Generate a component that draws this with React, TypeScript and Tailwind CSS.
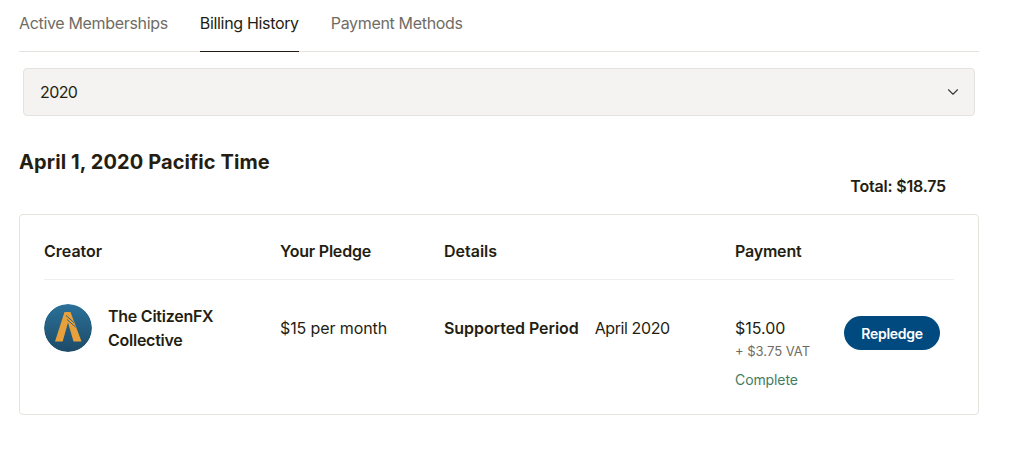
import React from 'react';
import { ChevronDown } from 'lucide-react';

const font = { fontFamily: 'Inter, "Liberation Sans", sans-serif' };

const CitizenLogo = () => (
  <svg viewBox="0 0 48 48" className="w-12 h-12 rounded-full shrink-0">
    <defs>
      <linearGradient id="cfx" x1="0" y1="0" x2="0" y2="1">
        <stop offset="0" stopColor="#2b7199" />
        <stop offset="1" stopColor="#1d4a68" />
      </linearGradient>
    </defs>
    <circle cx="24" cy="24" r="24" fill="url(#cfx)" />
    <path d="M20.5 8H26.5L37.5 37.5H29.5L24 18.5L18.7 37.5H11Z" fill="#e8a03a" />
    <path d="M22 11.5L30 18.5M23 15.5L31.5 23" stroke="#27658b" strokeWidth="1" fill="none" />
  </svg>
);

export default function App() {
  return (
    <div className="w-[1016px] h-[457px] bg-white overflow-hidden pl-[19px] text-[#241e12]" style={font}>
      <div className="w-[960px]">
        <div className="flex gap-8 h-[52px] border-b border-[#e5e3dd] text-[16px] tracking-[-0.33px] text-[#706c64]">
          <div className="pt-[11px]">Active Memberships</div>
          <div className="pt-[11px] h-[52px] border-b border-[#241e12] text-[#241e12]">Billing History</div>
          <div className="pt-[11px]">Payment Methods</div>
        </div>

        <div className="mx-1 mt-4 h-12 flex items-center justify-between bg-[#f4f3f1] border border-[#e5e3dd] rounded pl-4 pr-3 text-[16px]">
          <span className="tracking-[-0.6px]">2020</span>
          <ChevronDown className="w-[18px] h-[18px] text-[#3d3a34]" strokeWidth={1.5} />
        </div>

        <h2 className="mt-[33px] text-[20px] leading-[26px] font-bold tracking-[0.1px]">April 1, 2020 Pacific Time</h2>

        <div className="mt-[1px] pr-[33px] text-right text-[16px] leading-5 font-semibold tracking-[-0.2px]">Total: $18.75</div>

        <div className="mt-[18px] h-[201px] border border-[#e5e3dd] rounded px-6">
          <div className="flex h-[65px] pt-[8px] items-center border-b border-[#f0efeb] text-[16px] font-semibold">
            <div className="w-[236px]">Creator</div>
            <div className="w-[164px] tracking-[-0.2px]">Your Pledge</div>
            <div className="w-[291px]">Details</div>
            <div className="tracking-[-0.2px]">Payment</div>
          </div>

          <div className="flex pt-6">
            <div className="w-[236px] flex items-start gap-4">
              <CitizenLogo />
              <div className="text-[16px] leading-6 font-semibold w-[120px] tracking-[-0.25px]">The CitizenFX Collective</div>
            </div>
            <div className="w-[164px] pt-[12px] text-[16px] leading-6 tracking-[-0.1px]">$15 per month</div>
            <div className="w-[291px] pt-[12px] flex gap-4 text-[16px] leading-6">
              <span className="font-semibold tracking-[-0.06px]">Supported Period</span>
              <span className="tracking-[-0.4px]">April 2020</span>
            </div>
            <div className="w-[109px] pt-[12px]">
              <div className="text-[16px] leading-6">$15.00</div>
              <div className="mt-[2px] text-[13px] leading-[18px] text-[#706c64]">+ $3.75 VAT</div>
              <div className="mt-[11px] text-[14px] leading-[18px] text-[#3f7d5f] tracking-[-0.1px]">Complete</div>
            </div>
            <div className="pt-3">
              <button className="w-24 h-[34px] rounded-full bg-[#004a7f] text-white text-[14px] tracking-[-0.3px] font-semibold">Repledge</button>
            </div>
          </div>
        </div>
      </div>
    </div>
  );
}
